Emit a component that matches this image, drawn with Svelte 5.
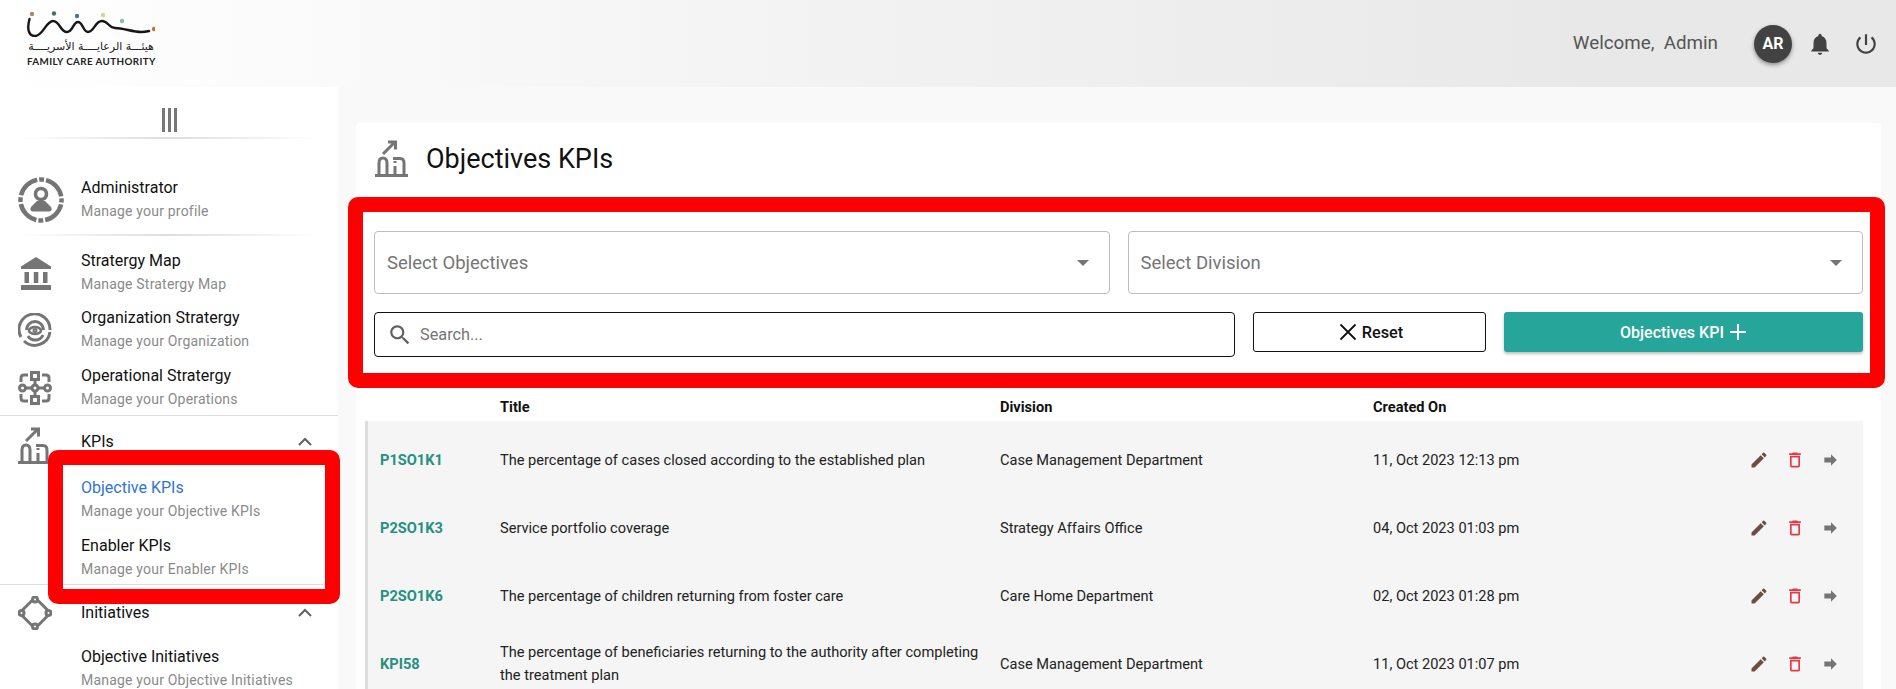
<script>
  const rows = [
    { code: 'P1SO1K1', title: 'The percentage of cases closed according to the established plan', division: 'Case Management Department', date: '11, Oct 2023 12:13 pm' },
    { code: 'P2SO1K3', title: 'Service portfolio coverage', division: 'Strategy Affairs Office', date: '04, Oct 2023 01:03 pm' },
    { code: 'P2SO1K6', title: 'The percentage of children returning from foster care', division: 'Care Home Department', date: '02, Oct 2023 01:28 pm' },
    { code: 'KPI58', title: 'The percentage of beneficiaries returning to the authority after completing the treatment plan', division: 'Case Management Department', date: '11, Oct 2023 01:07 pm' }
  ];
</script>

{#snippet kpiIcon()}
  <svg class="kpi" width="33" height="37" viewBox="0 0 33 37" fill="none" stroke="#757575" stroke-width="3">
    <path d="M0 35.500h33" />
    <path d="M4 35V23q0-5 4-5t4 5v12" />
    <path d="M20 35V26M20 23v-2" />
    <path d="M18 18.500h7q4 0 4 4.500v12" />
    <path d="M8 14 19 3M13 2h7.500v7.500" />
  </svg>
{/snippet}

{#snippet chevron()}
  <svg class="chev" width="14" height="9" viewBox="0 0 14 9" fill="none" stroke="#616161" stroke-width="2"><path d="M1 8l6-6 6 6" /></svg>
{/snippet}

<div class="page">
  <header class="top">
    <div class="logo">
      <svg class="wave" width="128" height="26" viewBox="0 0 128 26" fill="none">
        <path d="M2.500 8C0 17 1 25 8 25 16 25 19 10 26 10 33 10 33 21 40 21 46 21 46 11 51 11 56 11 56 21 61 21 67 21 68 10 75 10 81 10 82 17 88 17 96 17 106 21 114 21 117 21 120 20.500 122 20" stroke="#161616" stroke-width="2.400" stroke-linecap="round" />
        <circle cx="5" cy="3" r="2.200" fill="#a08c74" />
        <circle cx="27" cy="2.500" r="2.200" fill="#3f7560" />
        <circle cx="50" cy="5" r="2.200" fill="#3f7a90" />
        <circle cx="76" cy="4" r="2.200" fill="#d5d690" />
        <circle cx="95" cy="10" r="2.200" fill="#7fc0b4" />
        <circle cx="127" cy="18" r="2.200" fill="#e0672a" />
      </svg>
      <div class="ar" dir="rtl">هيئـــة الرعايــــة الأسريــــة</div>
      <div class="en">FAMILY CARE AUTHORITY</div>
    </div>
    <div class="user">
      <span class="welcome">Welcome,&nbsp; Admin</span>
      <span class="avatar">AR</span>
      <svg class="bell" width="26" height="26" viewBox="0 0 24 24" fill="#424242"><path d="M12 22c1.100 0 2-.9 2-2h-4c0 1.100.89 2 2 2zm6-6v-5c0-3.070-1.640-5.640-4.500-6.320V4c0-.83-.67-1.500-1.500-1.500s-1.500.67-1.500 1.500v.68C7.630 5.360 6 7.920 6 11v5l-2 2v1h16v-1l-2-2z" /></svg>
      <svg class="power" width="26" height="26" viewBox="0 0 24 24" fill="#424242"><path d="M13 3h-2v10h2V3zm4.830 2.170l-1.420 1.420C17.990 7.860 19 9.810 19 12c0 3.870-3.130 7-7 7s-7-3.130-7-7c0-2.190 1.010-4.140 2.580-5.420L6.170 5.170C4.230 6.820 3 9.260 3 12c0 4.970 4.030 9 9 9s9-4.030 9-9c0-2.740-1.230-5.180-3.170-6.830z" /></svg>
    </div>
  </header>

  <div class="body">
    <aside class="side">
      <div class="burger"><i></i><i></i><i></i></div>
      <div class="fade"></div>

      <div class="item admin">
        <span class="ic">
          <svg width="46" height="46" viewBox="0 0 46 46" fill="none" stroke="#757575">
            <circle cx="23" cy="23" r="20.500" stroke-width="4.500" stroke-dasharray="5 2 23.200 2" stroke-dashoffset="2.500" />
            <circle cx="23" cy="17" r="5.500" stroke-width="3.600" />
            <path d="M19 24 13 30q-2 4 2 4.500h16q4-.5 2-4.500l-6-6z" fill="#757575" stroke="none" />
          </svg>
        </span>
        <div class="txt"><b>Administrator</b><small>Manage your profile</small></div>
      </div>
      <div class="fade second"></div>

      <div class="item map">
        <span class="ic">
          <svg class="bank" width="30" height="33" viewBox="0 0 30 33" fill="#757575">
            <path d="M15 0 30 9.500V12H0V9.500z" />
            <rect x="3.500" y="15" width="4.500" height="11" /><rect x="12.800" y="15" width="4.500" height="11" /><rect x="22" y="15" width="4.500" height="11" />
            <rect x="0" y="28" width="30" height="5" />
          </svg>
        </span>
        <div class="txt"><b>Stratergy Map</b><small>Manage Stratergy Map</small></div>
      </div>
      <div class="item org">
        <span class="ic">
          <svg width="34" height="34" viewBox="0 0 34 34" fill="none" stroke="#757575" stroke-width="3">
            <path d="M3 24A15.500 15.500 0 1 1 32 17" /><path d="M32 19A15.500 15.500 0 0 1 6 28" />
            <path d="M8.500 17a8.500 8.500 0 0 1 17 0" /><ellipse cx="17" cy="17.500" rx="6" ry="3.500" stroke-width="2.600" /><circle cx="17" cy="17.500" r="1" /><path d="M10 23a8.500 8.500 0 0 0 15-1" />
          </svg>
        </span>
        <div class="txt"><b>Organization Stratergy</b><small>Manage your Organization</small></div>
      </div>
      <div class="item op">
        <span class="ic">
          <svg width="34" height="34" viewBox="0 0 34 34" fill="none" stroke="#757575" stroke-width="3">
            <rect x="13.500" y="1.500" width="7" height="7" /><rect x="13.500" y="25.500" width="7" height="7" />
            <circle cx="4.500" cy="17" r="3" /><circle cx="29.500" cy="17" r="3" /><circle cx="17" cy="17" r="3" />
            <path d="M7.500 17H14M20 17h6.500M17 9v5M17 20v5" />
            <path d="M3 11V7q0-3 3-3h4M24 4h4q3 0 3 3v4M31 23v4q0 3-3 3h-4M10 30H6q-3 0-3-3v-4" />
          </svg>
        </span>
        <div class="txt"><b>Operational Stratergy</b><small>Manage your Operations</small></div>
      </div>

      <div class="group kpis">
        <div class="item head">
          <span class="ic">{@render kpiIcon()}</span>
          <div class="txt"><b>KPIs</b></div>
          {@render chevron()}
        </div>
        <div class="sub">
          <div class="txt"><b class="active">Objective KPIs</b><small>Manage your Objective KPIs</small></div>
          <div class="txt"><b>Enabler KPIs</b><small>Manage your Enabler KPIs</small></div>
        </div>
      </div>

      <div class="group inits">
        <div class="item head">
          <span class="ic">
            <svg width="34" height="34" viewBox="0 0 34 34" fill="none" stroke="#757575" stroke-width="3">
              <path d="M14.500 4 4 14.500M19.500 4 30 14.500M4 19.500 14.500 30M30 19.500 19.500 30" />
              <circle cx="17" cy="3.500" r="2.500" /><circle cx="3.500" cy="17" r="2.500" /><circle cx="30.500" cy="17" r="2.500" /><circle cx="17" cy="30.500" r="2.500" />
            </svg>
          </span>
          <div class="txt"><b>Initiatives</b></div>
          {@render chevron()}
        </div>
        <div class="sub">
          <div class="txt"><b>Objective Initiatives</b><small>Manage your Objective Initiatives</small></div>
        </div>
      </div>
    </aside>

    <main class="main">
      <section class="card">
        <div class="title-row">
          {@render kpiIcon()}
          <h1>Objectives KPIs</h1>
        </div>

        <div class="selects">
          <div class="select"><span>Select Objectives</span><i class="caret"></i></div>
          <div class="select"><span>Select Division</span><i class="caret"></i></div>
        </div>

        <div class="actions">
          <div class="search">
            <svg width="26" height="26" viewBox="0 0 24 24" fill="#616161"><path d="M15.500 14h-.79l-.28-.27C15.410 12.590 16 11.110 16 9.500 16 5.910 13.090 3 9.500 3S3 5.910 3 9.500 5.910 16 9.500 16c1.610 0 3.090-.59 4.230-1.570l.27.28v.79l5 4.990L20.490 19l-4.990-5zm-6 0C7.010 14 5 11.990 5 9.500S7.010 5 9.500 5 14 7.010 14 9.500 11.990 14 9.500 14z" /></svg>
            <span>Search...</span>
          </div>
          <button class="reset">
            <svg width="18" height="18" viewBox="0 0 18 18" stroke="#111" stroke-width="1.800"><path d="M1.500 1.500l15 15M16.500 1.500l-15 15" /></svg>
            Reset
          </button>
          <button class="add">
            Objectives KPI
            <svg width="18" height="18" viewBox="0 0 18 18" stroke="#fff" stroke-width="2"><path d="M9 1v16M1 9h16" /></svg>
          </button>
        </div>

        <div class="table">
          <div class="thead">
            <span></span><span>Title</span><span>Division</span><span>Created On</span><span></span>
          </div>
          <div class="tbody">
            {#each rows as r}
              <div class="tr">
                <span class="code">{r.code}</span>
                <span class="t">{r.title}</span>
                <span>{r.division}</span>
                <span>{r.date}</span>
                <span class="ops">
                  <svg width="20" height="20" viewBox="0 0 24 24" fill="#6d4c41"><path d="M3 17.250V21h3.750L17.810 9.940l-3.750-3.750L3 17.250zM20.710 7.040c.39-.39.39-1.020 0-1.410l-2.340-2.340c-.39-.39-1.020-.39-1.410 0l-1.830 1.830 3.750 3.750 1.830-1.830z" /></svg>
                  <svg width="20" height="20" viewBox="0 0 24 24" fill="#e53946"><path d="M6 19c0 1.100.9 2 2 2h8c1.100 0 2-.9 2-2V7H6v12zM8 9h8v10H8V9zm7.500-5l-1-1h-5l-1 1H5v2h14V4z" /></svg>
                  <svg width="20" height="20" viewBox="0 0 24 24" fill="#757575"><path d="M4 9h8V5l7 7-7 7v-4H4z" /></svg>
                </span>
              </div>
            {/each}
          </div>
        </div>
      </section>
    </main>
  </div>

  <div class="mark mark-filters"></div>
  <div class="mark mark-side"></div>
</div>

<style>
  :global(body) { margin: 0; background: #f9f9f9; }
  .page {
    position: relative;
    width: 1896px;
    height: 689px;
    overflow: hidden;
    font-family: Roboto, "Noto Sans", sans-serif;
    color: #111;
  }
  .top {
    height: 87px;
    display: flex;
    justify-content: space-between;
    background: linear-gradient(90deg, #fff 0%, #f2f2f2 45%, #e8e8e8 85%);
  }
  .logo { padding: 11px 0 0 27px; width: 128px; display: flex; flex-direction: column; }
  .wave { display: block; }
  .ar { font: 400 11px/14px "DejaVu Sans", sans-serif; color: #222; text-align: center; white-space: nowrap; margin-top: 3px; }
  .en { font: 700 9.800px/14px Lato, sans-serif; color: #222; white-space: nowrap; letter-spacing: .4px; }
  .user { display: flex; align-items: center; padding-right: 17px; }
  .welcome { font-size: 18.800px; color: #555; margin-right: 36px; padding-bottom: 2px; }
  .avatar {
    width: 38px; height: 38px; border-radius: 50%;
    background: #424242; color: #fff; font-weight: 700; font-size: 16px;
    display: flex; align-items: center; justify-content: center;
    box-shadow: 0 2px 4px rgba(0,0,0,.4);
    margin-right: 15px;
  }
  .bell { margin-right: 20px; }

  .body { display: flex; height: 602px; }
  .side { width: 338px; background: #fff; flex: none; }
  .burger { display: flex; justify-content: center; gap: 3px; padding-top: 21px; height: 24px; margin-bottom: 5px; }
  .burger i { width: 3px; height: 24px; background: #777; }
  .fade { height: 2px; margin: 0 18px; background: linear-gradient(90deg, #fff, #ddd 50%, #fff); }
  .item { display: flex; align-items: center; position: relative; }
  .ic { width: 81px; flex: none; display: flex; padding-left: 18px; box-sizing: border-box; }
  .bank { margin-left: 3px; }
  .txt { display: flex; flex-direction: column; }
  .txt b { font-weight: 400; font-size: 16px; line-height: 22px; color: #111; white-space: nowrap; }
  .txt b.active { color: #2f74d6; }
  .txt small { font-size: 14px; line-height: 24px; color: #8a8a8a; white-space: nowrap; letter-spacing: .2px; }
  .admin { margin-top: 32px; height: 58px; }
  .second { margin-top: 5px; }
  .map { margin-top: 14px; }
  .org { margin-top: 11px; }
  .op { margin-top: 12px; }
  .group { border-top: 1px solid #ddd; }
  .kpis { margin-top: 4px; height: 168px; }
  .head { align-items: flex-start; height: 61px; }
  .head .ic { padding-top: 11px; }
  .head .txt { padding-top: 15px; }
  .chev { position: absolute; right: 26px; top: 21px; }
  .sub { padding-left: 81px; display: flex; flex-direction: column; gap: 12px; }
  .inits .head .txt { padding-top: 17px; }
  .inits .chev { top: 23px; }

  .main { flex: 1; padding: 36px 15px 0 18px; min-width: 0; }
  .card { background: #fff; padding: 0 18px 0 18px; height: 570px; border-radius: 4px; }
  .title-row { display: flex; align-items: center; gap: 18px; padding-top: 17px; height: 37px; }
  .title-row .kpi { flex: none; margin-left: 1px; }
  h1 { margin: 0; font-weight: 400; font-size: 27px; color: #111; }

  .selects { display: grid; grid-template-columns: 1fr 1fr; gap: 18px; margin-top: 54px; }
  .select {
    height: 61px; border: 1px solid #bdbdbd; border-radius: 4px;
    display: flex; align-items: center; justify-content: space-between;
    padding: 0 20px 0 12px; font-size: 18.500px; color: #757575; background: #fff;
  }
  .caret { width: 0; height: 0; border: 6px solid transparent; border-top: 6px solid #757575; border-bottom: 0; }
  .actions { display: flex; gap: 18px; align-items: flex-start; margin-top: 18px; }
  .search {
    width: 861px; height: 45px; flex: none; border: 1px solid #111; border-radius: 4px;
    display: flex; align-items: center; gap: 7px; padding-left: 12px; box-sizing: border-box;
    font-size: 16.300px; color: #757575;
  }
  button {
    height: 40px; border-radius: 3px; font: 500 16px Roboto, sans-serif;
    display: flex; align-items: center; justify-content: center; gap: 5px; cursor: pointer; box-sizing: border-box;
  }
  .reset { width: 233px; background: #fff; border: 1px solid #111; color: #111; flex: none; font-size: 16.300px; padding-left: 9px; }
  .add { flex: 1; background: #26a69a; border: 0; color: #fff; box-shadow: 0 2px 3px rgba(0,0,0,.25); }

  .table { margin: 0 0 0 -9px; }
  .thead, .tr { display: grid; grid-template-columns: 120px 500px 373px 1fr 114px; align-items: center; padding-left: 12px; border-left: 3px solid transparent; }
  .thead { font-size: 14.600px; font-weight: 700; height: 28px; margin-top: 36px; color: #111; }
  .tbody { background: #f5f5f5; padding-top: 5px; border-left: 3px solid #ddd; }
  .tr { height: 68px; border-left: 0; font-size: 14.600px; line-height: 23px; color: #222; }
  .t { padding-right: 14px; }
  .code { color: #26907f; font-weight: 700; }
  .ops { display: flex; gap: 16px; }
  .ops svg { flex: none; }

  .mark { position: absolute; border: 15px solid #f00; border-radius: 10px; box-sizing: border-box; pointer-events: none; }
  .mark-filters { left: 348px; top: 197px; width: 1537px; height: 191px; }
  .mark-side { left: 48px; top: 450px; width: 292px; height: 154px; }
</style>
